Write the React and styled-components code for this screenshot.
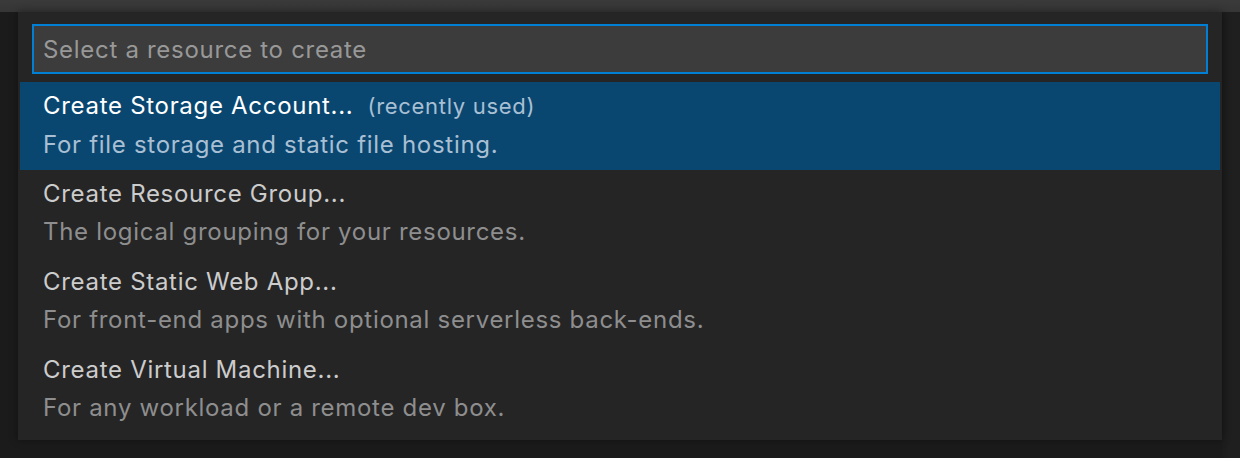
import React from 'react';
import styled, { createGlobalStyle } from 'styled-components';

const GlobalStyle = createGlobalStyle`
  html, body {
    margin: 0;
    padding: 0;
    background: #1b1b1b;
  }
  body {
    font-family: Inter, "Liberation Sans", sans-serif;
    -webkit-font-smoothing: antialiased;
  }
`;

const Screen = styled.div`
  width: 1240px;
  height: 458px;
  display: flex;
  flex-direction: column;
  background: #1b1b1b;
  overflow: hidden;
`;

const TitleStrip = styled.div`
  height: 12px;
  flex-shrink: 0;
  background: linear-gradient(#3a3a3a, #363636);
`;

const Body = styled.div`
  display: flex;
  flex: 1;
  padding-left: 18px;
  background: linear-gradient(90deg, #1b1b1b 0, #1b1b1b 1222px, #1c1c1c 1222px, #1f1f1f 1230px);
`;

const Picker = styled.div`
  width: 1204px;
  height: 428px;
  background: #252526;
  box-shadow: 0 0 8px rgba(0, 0, 0, 0.4);
  padding: 12px 2px 6px;
  box-sizing: border-box;
  display: flex;
  flex-direction: column;
`;

const InputWrap = styled.div`
  padding: 0 12px;
  margin-bottom: 8px;
`;

const Input = styled.input`
  width: 100%;
  height: 50px;
  box-sizing: border-box;
  border: 2px solid #007fd4;
  background: #3c3c3c;
  color: #cccccc;
  font-family: inherit;
  font-size: 24px;
  letter-spacing: 0.7px;
  padding: 0 9px;
  outline: none;
  &::placeholder {
    color: #989898;
  }
`;

const List = styled.ul`
  list-style: none;
  margin: 0;
  padding: 0;
`;

const Row = styled.li`
  height: 88px;
  box-sizing: border-box;
  padding: 5px 23px 7px;
  background: ${p => (p.$selected ? '#094771' : 'transparent')};
  display: flex;
  flex-direction: column;
  font-size: 24px;
  letter-spacing: 0.7px;
  white-space: nowrap;
`;

const Title = styled.div`
  line-height: 37px;
  color: ${p => (p.$selected ? '#ffffff' : '#cccccc')};
`;

const Tag = styled.span`
  margin-left: 14px;
  font-size: 22px;
  color: ${p => (p.$selected ? '#a9bfd3' : '#8e8e8e')};
`;

const Desc = styled.div`
  line-height: 39px;
  color: ${p => (p.$selected ? '#a9bfd3' : '#8e8e8e')};
`;

const items = [
  { title: 'Create Storage Account...', tag: '(recently used)', desc: 'For file storage and static file hosting.' },
  { title: 'Create Resource Group...', desc: 'The logical grouping for your resources.' },
  { title: 'Create Static Web App...', desc: 'For front-end apps with optional serverless back-ends.' },
  { title: 'Create Virtual Machine...', desc: 'For any workload or a remote dev box.' },
];

const App = () => {
  const selected = 0;
  return (
    <>
      <GlobalStyle />
      <Screen>
        <TitleStrip />
        <Body>
          <Picker>
            <InputWrap>
              <Input placeholder="Select a resource to create" />
            </InputWrap>
            <List>
              {items.map((item, i) => (
                <Row key={item.title} $selected={i === selected}>
                  <Title $selected={i === selected}>
                    {item.title}
                    {item.tag && <Tag $selected={i === selected}>{item.tag}</Tag>}
                  </Title>
                  <Desc $selected={i === selected}>{item.desc}</Desc>
                </Row>
              ))}
            </List>
          </Picker>
        </Body>
      </Screen>
    </>
  );
};

export default App;
